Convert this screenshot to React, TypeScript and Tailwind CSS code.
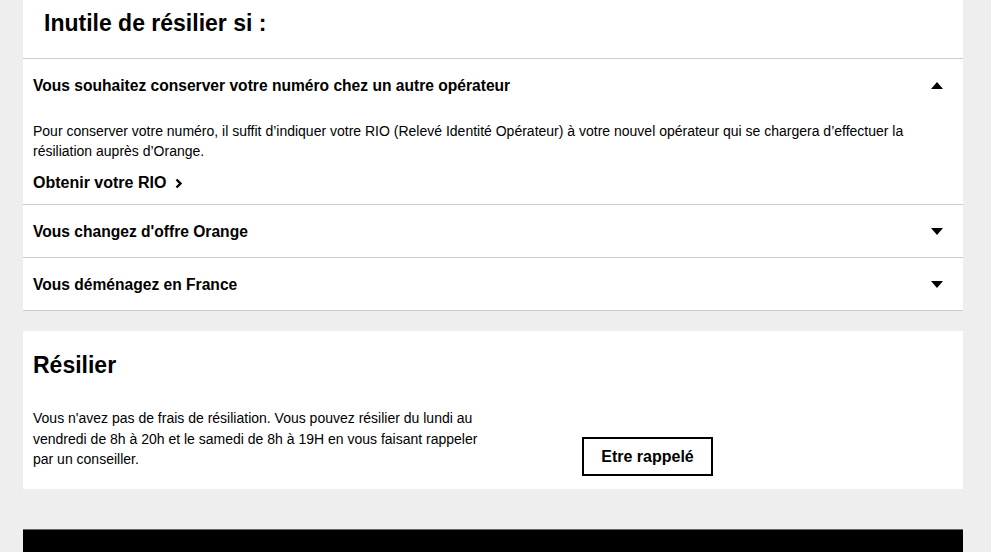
import { useState } from "react";

type Item = {
  id: string;
  title: string;
};

const items: Item[] = [
  { id: "rio", title: "Vous souhaitez conserver votre numéro chez un autre opérateur" },
  { id: "offre", title: "Vous changez d'offre Orange" },
  { id: "demenagement", title: "Vous déménagez en France" },
];

function Triangle({ up }: { up: boolean }) {
  return (
    <svg width="12" height="7" viewBox="0 0 12 7" className="shrink-0">
      {up ? <polygon points="6,0 12,7 0,7" fill="#000" /> : <polygon points="0,0 12,0 6,7" fill="#000" />}
    </svg>
  );
}

function Chevron() {
  return (
    <svg width="8" height="11" viewBox="0 0 8 11" className="ml-[9px]">
      <polyline points="1.5,1.5 5.5,5.5 1.5,9.5" fill="none" stroke="#000" strokeWidth="2.4" />
    </svg>
  );
}

export default function App() {
  const [open, setOpen] = useState<string | null>("rio");

  return (
    <div className="min-h-[552px] bg-[#eeeeee] px-[23px] text-black [font-family:'Liberation_Sans',Arial,sans-serif]">
      <div className="w-[940px] bg-white">
        <div className="border-b border-[#cccccc] pb-[21px] pl-[21px] pt-[10px]">
          <h2 className="text-[23px] font-bold leading-[27px]">Inutile de résilier si :</h2>
        </div>
        {items.map((item) => {
          const isOpen = open === item.id;
          return (
            <div key={item.id} className="border-b border-[#cccccc]">
              <button
                type="button"
                onClick={() => setOpen(isOpen ? null : item.id)}
                className="flex h-[52px] w-full items-center justify-between pl-[10px] pr-[20px] pt-[1px] text-left"
              >
                <span className="text-[15.6px] font-bold leading-5">{item.title}</span>
                <Triangle up={isOpen} />
              </button>
              {isOpen && item.id === "rio" && (
                <div className="px-[10px] pb-[11px] pt-[10px]">
                  <p className="text-[14px] leading-5">
                    Pour conserver votre numéro, il suffit d’indiquer votre RIO (Relevé Identité Opérateur) à votre
                    nouvel opérateur qui se chargera d’effectuer la résiliation auprès d’Orange.
                  </p>
                  <a href="#" className="mt-[12px] flex items-center text-[16px] font-bold leading-5">
                    Obtenir votre RIO
                    <Chevron />
                  </a>
                </div>
              )}
            </div>
          );
        })}
      </div>

      <div className="mt-[20px] w-[940px] bg-white px-[10px] pb-[13px] pt-[20px]">
        <h2 className="text-[23px] font-bold leading-[28px]">Résilier</h2>
        <div className="mt-[29px] flex items-start">
          <p className="w-[462px] text-[14px] leading-[20.5px]">
            Vous n'avez pas de frais de résiliation. Vous pouvez résilier du lundi au vendredi de 8h à 20h et le
            samedi de 8h à 19H en vous faisant rappeler par un conseiller.
          </p>
          <button
            type="button"
            className="ml-[87px] mt-[29px] flex h-[39px] w-[131px] items-center justify-center border-2 border-black text-[16px] font-bold"
          >
            Etre rappelé
          </button>
        </div>
      </div>

      <div className="mt-[40px] h-[60px] w-[940px] border-t border-[#666666] bg-black" />
    </div>
  );
}
